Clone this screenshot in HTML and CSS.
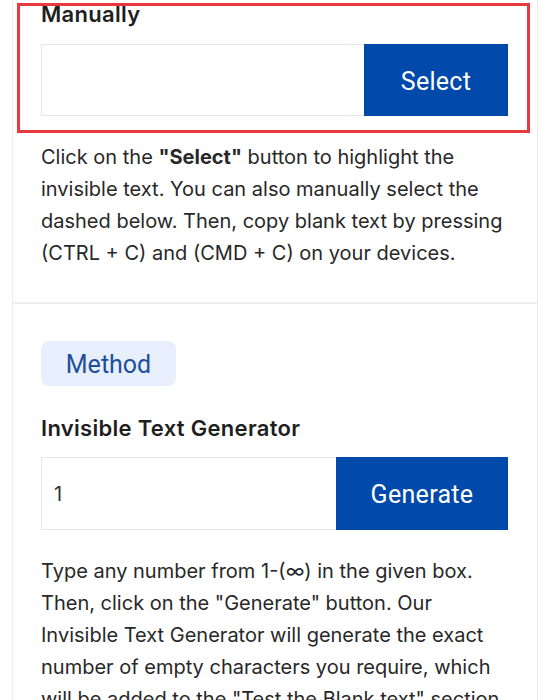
FILE: index.html
```html
<!DOCTYPE html>
<html lang="en">
<head>
<meta charset="utf-8">
<title>Invisible Text</title>
<link rel="stylesheet" href="styles.css">
</head>
<body>
<div class="page">
  <section class="card card-first">
    <div class="highlight-zone">
      <h3 class="title title-manual">Manually</h3>
      <div class="field-row">
        <div class="field"></div>
        <button class="btn btn-select">Select</button>
      </div>
      <div class="highlight"></div>
    </div>
    <p class="desc">Click on the <b>"Select"</b> button to highlight the invisible text. You can also manually select the dashed below. Then, copy blank text by pressing (CTRL + C) and (CMD + C) on your devices.</p>
  </section>
  <section class="card card-second">
    <span class="badge">Method</span>
    <h3 class="title title-gen">Invisible Text Generator</h3>
    <div class="field-row field-row-gen">
      <div class="field field-num">1</div>
      <button class="btn btn-gen">Generate</button>
    </div>
    <p class="desc">Type any number from 1-(∞) in the given box. Then, click on the "Generate" button. Our Invisible Text Generator will generate the exact number of empty characters you require, which will be added to the "Test the Blank text" section.</p>
  </section>
</div>
</body>
</html>
```
FILE: styles.css
```css
html, body {
  margin: 0;
  padding: 0;
  background: #ffffff;
}
body {
  font-family: Inter, "Noto Sans", sans-serif;
  color: #2a2a2a;
  overflow: hidden;
  height: 700px;
}
.page {
  padding: 0 12px;
}
.card {
  border: 1px solid #ececec;
  padding: 0 29px 0 28px;
}
.card-first {
  border-top: none;
  border-bottom: 2px solid #efefef;
  padding-bottom: 33px;
}
.card-second {
  border-top: none;
  padding-top: 37px;
  padding-bottom: 40px;
}
.highlight-zone {
  position: relative;
}
.highlight {
  position: absolute;
  left: -24px;
  right: -22px;
  top: 3px;
  bottom: -17px;
  border: 3px solid #e8393e;
  pointer-events: none;
}
.title {
  margin: 0;
  font-size: 22px;
  line-height: 28px;
  font-weight: 600;
  color: #1f1f1f;
  letter-spacing: 0.3px;
}
.field-row {
  display: flex;
  height: 72px;
  margin-top: 16px;
}
.field-row-gen {
  height: 73px;
  margin-top: 15px;
}
.field {
  flex: 1;
  border: 1px solid #e6e6e6;
  border-right: none;
  display: flex;
  align-items: center;
  padding-left: 12px;
  font-size: 20px;
  color: #333;
}
.btn {
  border: none;
  background: #0149ab;
  color: #ffffff;
  font-family: Roboto, "Open Sans", sans-serif;
  font-size: 25px;
  font-weight: 400;
  letter-spacing: 0.3px;
  margin: 0;
  padding: 0;
  cursor: pointer;
}
.btn-select {
  width: 144px;
  padding-top: 2px;
}
.btn-gen {
  width: 172px;
  padding-top: 2px;
}
.desc {
  margin: 25px 0 0;
  font-size: 20px;
  line-height: 32px;
  color: #282828;
}
.desc b {
  font-weight: 700;
}
.badge {
  display: inline-flex;
  align-items: center;
  justify-content: center;
  width: 135px;
  height: 45px;
  border-radius: 8px;
  background: #e8effc;
  color: #1c4f9c;
  font-family: Roboto, "Open Sans", sans-serif;
  font-size: 25px;
  padding-top: 1px;
  box-sizing: border-box;
}
.title-gen {
  margin-top: 28px;
}
```
